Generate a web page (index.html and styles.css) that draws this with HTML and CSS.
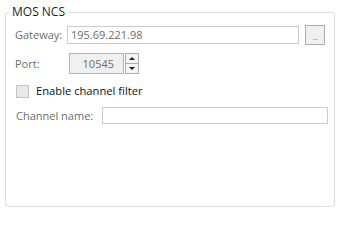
FILE: index.html
```html
<!DOCTYPE html>
<html>
<head>
<meta charset="utf-8">
<link rel="stylesheet" href="styles.css">
</head>
<body>
<fieldset class="group">
  <legend class="group-title">MOS NCS</legend>
  <div class="row row-gateway">
    <label class="lbl lbl-gateway">Gateway:</label>
    <div class="textbox tb-gateway">195.69.221.98</div>
    <button class="browse">...</button>
  </div>
  <div class="row row-port">
    <label class="lbl lbl-port">Port:</label>
    <div class="spin">
      <div class="spin-value">10545</div>
      <div class="spin-btns">
        <div class="spin-btn"><span class="arrow-up"></span></div>
        <div class="spin-btn"><span class="arrow-down"></span></div>
      </div>
    </div>
  </div>
  <div class="row row-check">
    <span class="checkbox"></span>
    <span class="check-lbl">Enable channel filter</span>
  </div>
  <div class="row row-channel">
    <label class="lbl lbl-channel">Channel name:</label>
    <div class="textbox tb-channel"></div>
  </div>
</fieldset>
</body>
</html>
```
FILE: styles.css
```css
html, body {
  margin: 0;
  padding: 0;
  background: #ffffff;
}
body {
  width: 339px;
  height: 211px;
  overflow: hidden;
  font-family: "Open Sans", "Noto Sans", sans-serif;
  font-size: 11px;
}
.group {
  box-sizing: border-box;
  margin: 4px 0 0 5px;
  width: 330px;
  height: 203px;
  border: 1px solid #d5dfe5;
  border-radius: 3px;
  padding: 5px 0 0 9px;
  min-width: 0;
}
.group-title {
  margin-left: -6px;
  padding: 0 3px;
  font-size: 12px;
  line-height: 16px;
  color: #1e1e1e;
}
.row {
  display: flex;
  align-items: center;
}
.lbl {
  color: #6d6d6d;
  line-height: 16px;
}
.row-gateway {
  height: 20px;
}
.lbl-gateway {
  width: 52px;
}
.textbox {
  box-sizing: border-box;
  border: 1px solid #cccccc;
  background: #ffffff;
  color: #6d6d6d;
  line-height: 16px;
  padding-left: 3px;
}
.tb-gateway {
  width: 232px;
  height: 18px;
}
.browse {
  box-sizing: border-box;
  margin-left: 6px;
  width: 20px;
  height: 20px;
  padding: 0;
  border: 1px solid #adadad;
  background: #f0f0f0;
  color: #7a7a9a;
  font-family: "Open Sans", sans-serif;
  font-size: 8px;
  line-height: 22px;
  letter-spacing: -0.5px;
}
.row-port {
  margin-top: 8px;
  height: 21px;
}
.lbl-port {
  width: 54px;
}
.spin {
  display: flex;
  height: 21px;
}
.spin-value {
  box-sizing: border-box;
  width: 55px;
  height: 21px;
  border: 1px solid #b4b4b4;
  background: #f0f0f0;
  color: #6d6d6d;
  text-align: right;
  padding-right: 9px;
  line-height: 19px;
}
.spin-btns {
  display: flex;
  flex-direction: column;
  margin-left: 1px;
  width: 14px;
}
.spin-btn {
  box-sizing: border-box;
  height: 10.5px;
  border: 1px solid #adadad;
  background: #f5f5f5;
  display: flex;
  align-items: center;
  justify-content: center;
}
.spin-btn + .spin-btn {
  border-top: none;
}
.arrow-up {
  width: 0;
  height: 0;
  border-left: 3px solid transparent;
  border-right: 3px solid transparent;
  border-bottom: 3px solid #1e1e1e;
}
.arrow-down {
  width: 0;
  height: 0;
  border-left: 3px solid transparent;
  border-right: 3px solid transparent;
  border-top: 3px solid #1e1e1e;
}
.row-check {
  margin-top: 10px;
  height: 14px;
}
.checkbox {
  box-sizing: border-box;
  margin-left: 1px;
  width: 13px;
  height: 13px;
  border: 1px solid #c4c4c4;
  background: #e8e8e8;
}
.check-lbl {
  margin-left: 7px;
  color: #111111;
  font-size: 11.2px;
  line-height: 16px;
}
.row-channel {
  margin-top: 9px;
  height: 17px;
}
.lbl-channel {
  width: 86px;
  padding-left: 1px;
}
.tb-channel {
  width: 226px;
  height: 17px;
}
```
